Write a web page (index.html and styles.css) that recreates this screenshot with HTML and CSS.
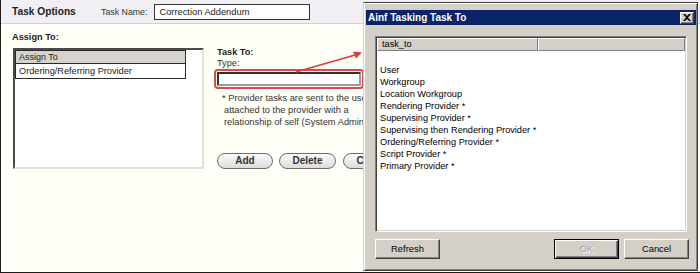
FILE: index.html
```html
<!DOCTYPE html>
<html>
<head>
<meta charset="utf-8">
<link rel="stylesheet" href="styles.css">
</head>
<body>
<div class="page">
  <div class="topbar">
    <div class="title">Task Options</div>
    <div class="name-label">Task Name:</div>
    <div class="name-input">Correction Addendum</div>
  </div>
  <div class="main">
    <div class="left-col">
      <div class="heading">Assign To:</div>
      <div class="listbox">
        <div class="assign-table">
          <div class="assign-head">Assign To</div>
          <div class="assign-row">Ordering/Referring Provider</div>
        </div>
      </div>
    </div>
    <div class="mid-col">
      <div class="heading">Task To:</div>
      <div class="type-label">Type:</div>
      <div class="type-input"></div>
      <div class="note">
        <div class="note-first">* Provider tasks are sent to the user</div>
        <div class="note-line">attached to the provider with a</div>
        <div class="note-line">relationship of self (System Admin)</div>
      </div>
      <div class="pill-row">
        <div class="pill pill-add">Add</div>
        <div class="pill pill-delete">Delete</div>
        <div class="pill pill-cancel">Cancel</div>
      </div>
    </div>
  </div>

  <div class="dialog">
    <div class="dlg-title">
      <span class="dlg-title-text">Ainf Tasking Task To</span>
      <span class="dlg-close">
        <svg width="8" height="7" viewBox="0 0 8 7"><path d="M0 0h2l2 2 2-2h2L5 3.5 8 7H6L4 5 2 7H0l3-3.5z" fill="#000"/></svg>
      </span>
    </div>
    <div class="dlg-list">
      <div class="dlg-head">
        <div class="dlg-hcell dlg-hcell-1">task_to</div>
        <div class="dlg-hcell dlg-hcell-2"></div>
      </div>
      <div class="dlg-item"></div>
      <div class="dlg-item">User</div>
      <div class="dlg-item">Workgroup</div>
      <div class="dlg-item">Location Workgroup</div>
      <div class="dlg-item">Rendering Provider *</div>
      <div class="dlg-item">Supervising Provider *</div>
      <div class="dlg-item">Supervising then Rendering Provider *</div>
      <div class="dlg-item">Ordering/Referring Provider *</div>
      <div class="dlg-item">Script Provider *</div>
      <div class="dlg-item">Primary Provider *</div>
    </div>
    <div class="dlg-buttons">
      <div class="win-btn">Refresh</div>
      <div class="dlg-spacer"></div>
      <div class="win-btn win-btn-default win-btn-disabled">OK</div>
      <div class="win-btn">Cancel</div>
    </div>
  </div>

  <svg class="arrow" width="700" height="273" viewBox="0 0 700 273">
    <line x1="295" y1="72" x2="354" y2="55" stroke="#e23a3a" stroke-width="1.8"/>
    <path d="M361 52.5 L352 51.5 L355 58.5 Z" fill="#e23a3a"/>
  </svg>
</div>
</body>
</html>
```

FILE: styles.css
```css
html, body {
  margin: 0;
  padding: 0;
  background: #ffffff;
}

.page {
  position: relative;
  width: 700px;
  height: 273px;
  box-sizing: border-box;
  border-left: 1px solid #1c1c1c;
  border-bottom: 1px solid #1c1c1c;
  background: #fffff7;
  overflow: hidden;
  font-family: "Liberation Sans", Arial, sans-serif;
  color: #222;
}

.topbar {
  height: 23px;
  background: #f1eff4;
  border-bottom: 1px solid #d2ced6;
  display: flex;
  align-items: center;
  padding-left: 11px;
}

.title {
  width: 89px;
  font-weight: bold;
  font-size: 10.2px;
  color: #222;
}

.name-label {
  font-size: 8.8px;
  color: #333;
  margin-right: 7px;
}

.name-input {
  width: 156px;
  height: 16px;
  box-sizing: border-box;
  border: 1px solid #333;
  background: #fff;
  font-size: 9.3px;
  line-height: 14px;
  padding-left: 4px;
  color: #222;
}

.main {
  display: flex;
  padding: 8px 0 0 11px;
}

.left-col {
  width: 192px;
  flex: none;
}

.heading {
  font-weight: bold;
  font-size: 9.2px;
  line-height: 11px;
  color: #222;
}

.listbox {
  margin-top: 5px;
  margin-left: 1px;
  width: 191px;
  height: 121px;
  box-sizing: border-box;
  border: 2px solid;
  border-color: #4a4a4a #e2e0da #e2e0da #4a4a4a;
  background: #fff;
}

.assign-table {
  width: 171px;
  border: 1px solid #2a2a2a;
  box-sizing: border-box;
}

.assign-head {
  height: 12px;
  background: #d6d3ce;
  border-bottom: 1px solid #2a2a2a;
  font-size: 9px;
  line-height: 12px;
  padding-left: 3px;
  color: #222;
}

.assign-row {
  height: 14px;
  font-size: 9.2px;
  line-height: 14px;
  padding-left: 3px;
  color: #222;
}

.mid-col {
  margin-left: 13px;
  padding-top: 15px;
  width: 160px;
  flex: none;
}

.type-label {
  font-size: 9.2px;
  line-height: 11px;
  color: #333;
}

.type-input {
  margin-top: 3px;
  width: 144px;
  height: 14px;
  box-sizing: border-box;
  border: 2px solid;
  border-color: #303030 #9a9a9a #9a9a9a #303030;
  background: #fff;
  outline: 2px solid #e04848;
  outline-offset: 1px;
  border-radius: 1px;
}

.note {
  margin-top: 6px;
  padding-left: 5px;
  font-size: 9.3px;
  line-height: 12px;
  color: #333;
  white-space: nowrap;
}

.note-line {
  padding-left: 2px;
}

.pill-row {
  margin-top: 25px;
  display: flex;
  gap: 6px;
}

.pill {
  flex: none;
  width: 56px;
  height: 16px;
  box-sizing: border-box;
  border: 1px solid #6c6c6c;
  border-radius: 8px;
  background: linear-gradient(#fbfbfb, #dcdcdc);
  font-weight: bold;
  font-size: 10px;
  line-height: 14px;
  text-align: center;
  color: #333;
}

.pill-delete {
  width: 57px;
}

.pill-cancel {
  width: 60px;
  margin-left: 1px;
}

/* Dialog window over the page */
.dialog {
  position: absolute;
  left: 362px;
  top: 2px;
  width: 335px;
  height: 269px;
  box-sizing: border-box;
  border: 1px solid;
  border-color: #3c3c3c #404040 #404040 #d4d0c8;
  box-shadow: inset 1px 1px #ffffff, inset -1px -1px #808080;
  background: #d4d0c8;
  padding: 7px 1px 0 2px;
  font-family: "Liberation Sans", Arial, sans-serif;
  color: #000;
  z-index: 2;
}

.dlg-title {
  height: 15px;
  background: #0a246a;
  display: flex;
  align-items: center;
  padding-left: 2px;
  padding-right: 2px;
}

.dlg-title-text {
  flex: 1;
  color: #fff;
  font-weight: bold;
  font-size: 10px;
  line-height: 15px;
}

.dlg-close {
  width: 14px;
  height: 12px;
  box-sizing: border-box;
  background: #d4d0c8;
  border: 1px solid;
  border-color: #ffffff #404040 #404040 #ffffff;
  box-shadow: inset -1px -1px #808080;
  display: flex;
  align-items: center;
  justify-content: center;
}

.dlg-list {
  margin: 11px 9px 0 9px;
  height: 196px;
  box-sizing: border-box;
  border: 1px solid;
  border-color: #808080 #ffffff #ffffff #808080;
  box-shadow: inset 1px 1px #404040, inset -1px -1px #d4d0c8;
  background: #fff;
  padding: 1px;
}

.dlg-head {
  display: flex;
  height: 13px;
  margin-bottom: 1px;
}

.dlg-hcell {
  height: 13px;
  box-sizing: border-box;
  background: #d4d0c8;
  border: 1px solid;
  border-color: #ffffff #808080 #808080 #ffffff;
  font-size: 9.2px;
  line-height: 11px;
  padding-left: 4px;
  color: #000;
}

.dlg-hcell-1 {
  width: 161px;
}

.dlg-hcell-2 {
  flex: 1;
}

.dlg-item {
  height: 12px;
  font-size: 9.2px;
  line-height: 12px;
  padding-left: 3px;
  color: #000;
  white-space: nowrap;
}

.dlg-buttons {
  display: flex;
  margin: 7px 7px 0 9px;
  gap: 5px;
}

.dlg-spacer {
  flex: 1;
}

.win-btn {
  width: 65px;
  height: 20px;
  box-sizing: border-box;
  border: 1px solid;
  border-color: #ffffff #404040 #404040 #ffffff;
  box-shadow: inset -1px -1px #808080;
  background: #d4d0c8;
  font-size: 9.4px;
  line-height: 18px;
  text-align: center;
  color: #000;
}

.win-btn-default {
  border-color: #000;
  box-shadow: inset 1px 1px #ffffff, inset -1px -1px #404040, inset -2px -2px #808080;
}

.win-btn-disabled {
  color: #a09d97;
  text-shadow: 1px 1px #ffffff;
}

.arrow {
  position: absolute;
  left: 0;
  top: 0;
  z-index: 3;
  pointer-events: none;
}
```
